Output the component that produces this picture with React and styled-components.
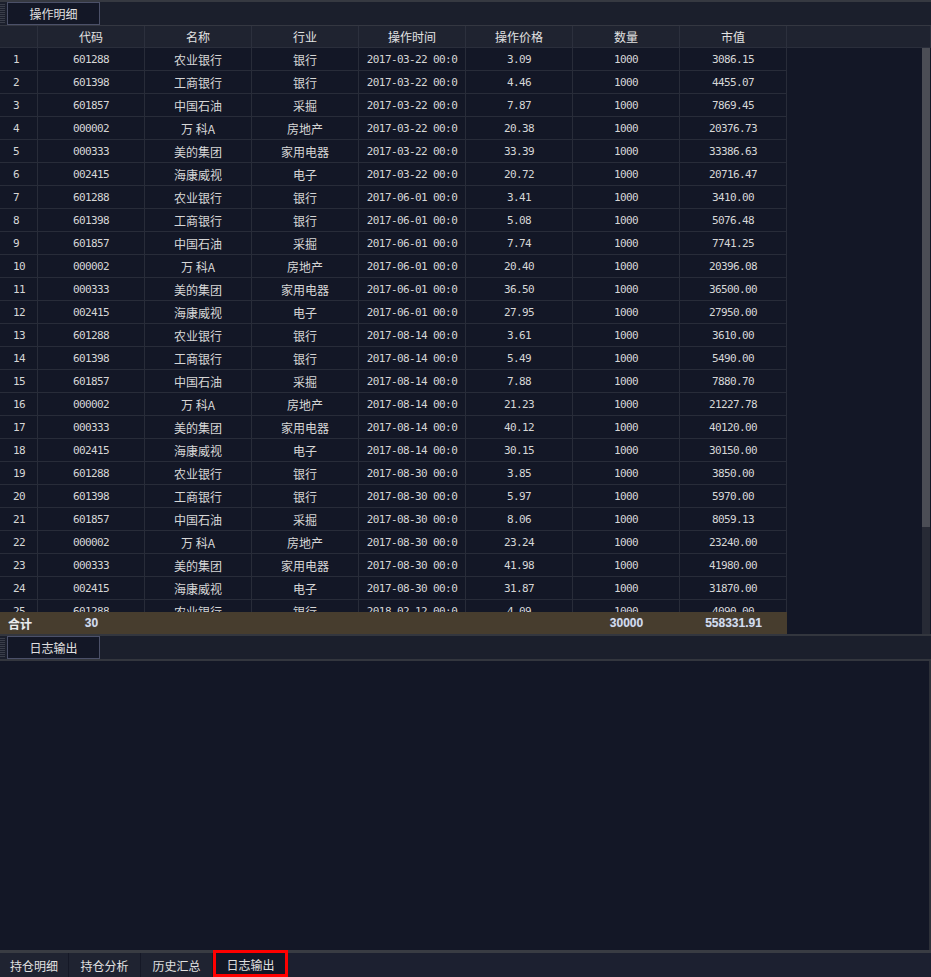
import React from "react";
import styled, { createGlobalStyle } from "styled-components";

const Global = createGlobalStyle`
  html, body { margin: 0; padding: 0; background: #131726; }
  * { box-sizing: border-box; }
`;

const CJK = `"Noto Sans CJK SC", "Noto Sans", sans-serif`;
const MONO = `"DejaVu Sans Mono", "Noto Sans CJK SC", monospace`;
const COLS = "38px repeat(7, 107px)";

const Page = styled.div`
  width: 931px;
  height: 977px;
  display: flex;
  flex-direction: column;
  background: #131726;
  color: #dcdcdc;
  font-family: ${CJK};
  font-size: 12px;
  overflow: hidden;
`;

const TopPanel = styled.section`
  height: 634px;
  display: flex;
  flex-direction: column;
`;

const TabStrip = styled.div`
  height: ${(p) => p.$h}px;
  flex: none;
  display: flex;
  align-items: stretch;
  background: #1b1f2c;
  border-top: ${(p) => p.$top}px solid #363941;
  border-bottom: ${(p) => p.$bottom}px solid #343741;
`;

const Grip = styled.div`
  width: 5px;
  margin: 2px 2px 2px 0;
  background: repeating-linear-gradient(
    to bottom,
    #3a3e4a 0px,
    #3a3e4a 1px,
    transparent 1px,
    transparent 2px
  );
`;

const PanelTab = styled.div`
  width: 93px;
  display: flex;
  align-items: center;
  justify-content: center;
  background: #131726;
  border: 1px solid #4b5068;
  color: #e0e0e0;
  font-size: 12px;
`;

const HeaderRow = styled.div`
  height: 22px;
  flex: none;
  display: grid;
  grid-template-columns: ${COLS} 1fr;
  background: #1f2330;
  border-bottom: 1px solid #2a2e3b;
`;

const HeadCell = styled.div`
  display: flex;
  align-items: center;
  justify-content: center;
  border-right: 1px solid #2c303d;
  color: #e2e2e2;
  font-size: 12px;
`;

const TableArea = styled.div`
  flex: 1;
  min-height: 0;
  display: flex;
`;

const TableMain = styled.div`
  flex: 1;
  min-width: 0;
  display: flex;
  flex-direction: column;
`;

const Body = styled.div`
  flex: 1;
  min-height: 0;
  overflow: hidden;
`;

const Row = styled.div`
  display: grid;
  grid-template-columns: ${COLS};
  width: 787px;
  height: 23px;
`;

const Cell = styled.div`
  display: flex;
  align-items: center;
  justify-content: ${(p) => (p.$left ? "flex-start" : "center")};
  padding-left: ${(p) => (p.$left ? "13px" : "0")};
  border-right: 1px solid #282c39;
  border-bottom: 1px solid #282c39;
  white-space: nowrap;
  overflow: hidden;
  font-family: ${(p) => (p.$mono ? MONO : CJK)};
  font-size: ${(p) => (p.$mono ? "11px" : "12px")};
  letter-spacing: ${(p) => (p.$mono ? "-0.6px" : "0")};
  color: #d6d6d6;
`;

const Footer = styled.div`
  height: 22px;
  flex: none;
  display: grid;
  grid-template-columns: ${COLS};
  width: 787px;
  background: #473d2e;
`;

const FootCell = styled.div`
  display: flex;
  align-items: center;
  justify-content: ${(p) => (p.$left ? "flex-start" : "center")};
  padding-left: ${(p) => (p.$left ? "8px" : "0")};
  font-family: ${(p) => (p.$cjk ? CJK : `"Liberation Sans", Arial, sans-serif`)};
  font-weight: 700;
  font-size: 12px;
  color: ${(p) => (p.$cjk ? "#ececec" : "#d4dcec")};
  text-shadow: 0 0 1px rgba(120, 150, 200, 0.5);
  white-space: nowrap;
  overflow: visible;
`;

const ScrollTrack = styled.div`
  width: 8px;
  margin-right: 1px;
  flex: none;
  display: flex;
  flex-direction: column;
  background: #272a35;
`;

const ScrollThumb = styled.div`
  height: 479px;
  background: #4b4d55;
`;

const Separator = styled.div`
  height: ${(p) => p.$h}px;
  flex: none;
  background: #33363e;
`;

const LogBody = styled.div`
  flex: 1;
  min-height: 0;
  background: #131726;
  border-right: 2px solid #2e3139;
`;

const BottomBar = styled.nav`
  height: 27px;
  flex: none;
  display: flex;
  align-items: stretch;
  background: #1c2030;
  border-top: 3px solid #393c43;
`;

const BottomTab = styled.div`
  width: ${(p) => p.$w}px;
  display: flex;
  align-items: center;
  justify-content: center;
  font-size: 12px;
  color: #e0e0e0;
  background: ${(p) => (p.$active ? "#131726" : "#1f2331")};
  border-right: 1px solid #151826;
  ${(p) =>
    p.$active &&
    `
    border: 3px solid #ff0000;
    margin-top: -3px;
    padding-top: 1px;
  `}
`;

const rows = [
  ["601288", "农业银行", "银行", "2017-03-22 00:0", "3.09", "1000", "3086.15"],
  ["601398", "工商银行", "银行", "2017-03-22 00:0", "4.46", "1000", "4455.07"],
  ["601857", "中国石油", "采掘", "2017-03-22 00:0", "7.87", "1000", "7869.45"],
  ["000002", "万 科A", "房地产", "2017-03-22 00:0", "20.38", "1000", "20376.73"],
  ["000333", "美的集团", "家用电器", "2017-03-22 00:0", "33.39", "1000", "33386.63"],
  ["002415", "海康威视", "电子", "2017-03-22 00:0", "20.72", "1000", "20716.47"],
  ["601288", "农业银行", "银行", "2017-06-01 00:0", "3.41", "1000", "3410.00"],
  ["601398", "工商银行", "银行", "2017-06-01 00:0", "5.08", "1000", "5076.48"],
  ["601857", "中国石油", "采掘", "2017-06-01 00:0", "7.74", "1000", "7741.25"],
  ["000002", "万 科A", "房地产", "2017-06-01 00:0", "20.40", "1000", "20396.08"],
  ["000333", "美的集团", "家用电器", "2017-06-01 00:0", "36.50", "1000", "36500.00"],
  ["002415", "海康威视", "电子", "2017-06-01 00:0", "27.95", "1000", "27950.00"],
  ["601288", "农业银行", "银行", "2017-08-14 00:0", "3.61", "1000", "3610.00"],
  ["601398", "工商银行", "银行", "2017-08-14 00:0", "5.49", "1000", "5490.00"],
  ["601857", "中国石油", "采掘", "2017-08-14 00:0", "7.88", "1000", "7880.70"],
  ["000002", "万 科A", "房地产", "2017-08-14 00:0", "21.23", "1000", "21227.78"],
  ["000333", "美的集团", "家用电器", "2017-08-14 00:0", "40.12", "1000", "40120.00"],
  ["002415", "海康威视", "电子", "2017-08-14 00:0", "30.15", "1000", "30150.00"],
  ["601288", "农业银行", "银行", "2017-08-30 00:0", "3.85", "1000", "3850.00"],
  ["601398", "工商银行", "银行", "2017-08-30 00:0", "5.97", "1000", "5970.00"],
  ["601857", "中国石油", "采掘", "2017-08-30 00:0", "8.06", "1000", "8059.13"],
  ["000002", "万 科A", "房地产", "2017-08-30 00:0", "23.24", "1000", "23240.00"],
  ["000333", "美的集团", "家用电器", "2017-08-30 00:0", "41.98", "1000", "41980.00"],
  ["002415", "海康威视", "电子", "2017-08-30 00:0", "31.87", "1000", "31870.00"],
  ["601288", "农业银行", "银行", "2018-02-12 00:0", "4.09", "1000", "4090.00"],
];

const headers = ["", "代码", "名称", "行业", "操作时间", "操作价格", "数量", "市值", ""];
const monoCols = [true, false, false, true, true, true, true];

const bottomTabs = [
  { label: "持仓明细", w: 69 },
  { label: "持仓分析", w: 72 },
  { label: "历史汇总", w: 72 },
  { label: "日志输出", w: 75, active: true },
];

export default function App() {
  return (
    <Page>
      <Global />
      <TopPanel>
        <TabStrip $h={26} $top={2} $bottom={1}>
          <Grip />
          <PanelTab>操作明细</PanelTab>
        </TabStrip>
        <HeaderRow>
          {headers.map((h, i) => (
            <HeadCell key={i}>{h}</HeadCell>
          ))}
        </HeaderRow>
        <TableArea>
          <TableMain>
            <Body>
              {rows.map((r, i) => (
                <Row key={i}>
                  <Cell $left $mono>
                    {i + 1}
                  </Cell>
                  {r.map((v, j) => (
                    <Cell key={j} $mono={monoCols[j]}>
                      {v}
                    </Cell>
                  ))}
                </Row>
              ))}
            </Body>
            <Footer>
              <FootCell $left $cjk>
                合计
              </FootCell>
              <FootCell>30</FootCell>
              <FootCell />
              <FootCell />
              <FootCell />
              <FootCell />
              <FootCell>30000</FootCell>
              <FootCell>558331.91</FootCell>
            </Footer>
          </TableMain>
          <ScrollTrack>
            <ScrollThumb />
          </ScrollTrack>
        </TableArea>
      </TopPanel>
      <Separator $h={2} />
      <TabStrip $h={23} $top={0} $bottom={0}>
        <Grip />
        <PanelTab>日志输出</PanelTab>
      </TabStrip>
      <Separator $h={2} />
      <LogBody />
      <BottomBar>
        {bottomTabs.map((t) => (
          <BottomTab key={t.label} $w={t.w} $active={t.active}>
            {t.label}
          </BottomTab>
        ))}
      </BottomBar>
    </Page>
  );
}
